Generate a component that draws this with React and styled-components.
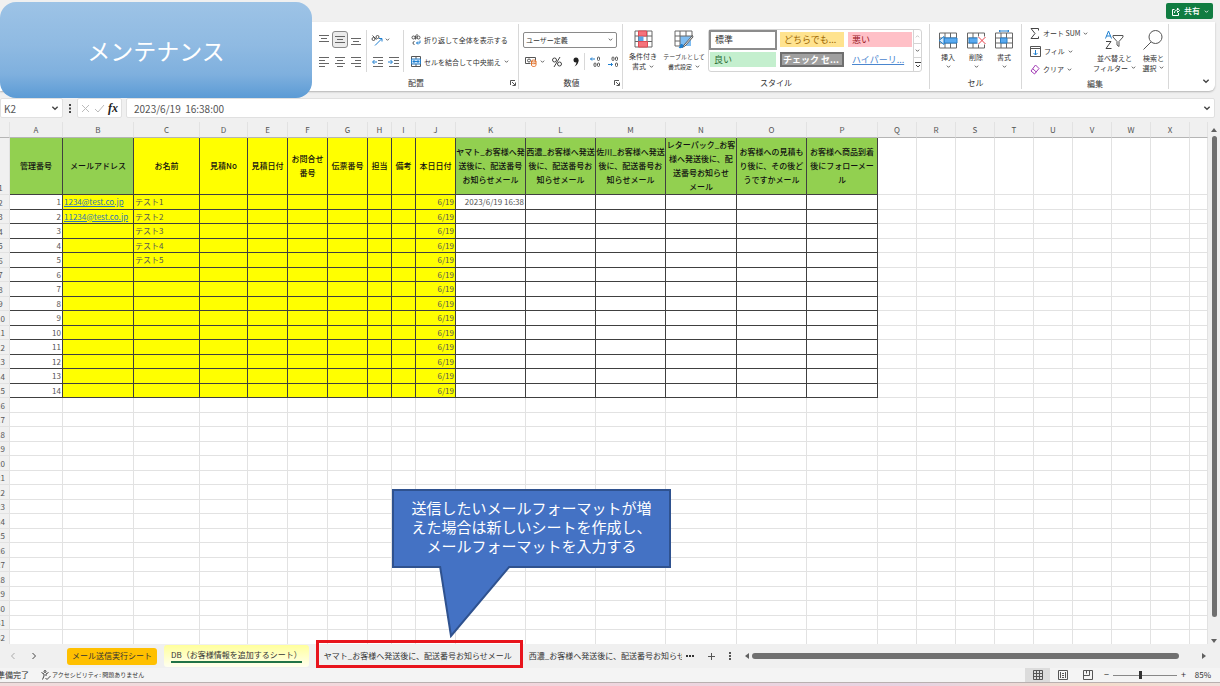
import React, { useState } from "react";
import styled, { createGlobalStyle, css } from "styled-components";

const GlobalStyle = createGlobalStyle`
  * {
    box-sizing: border-box;
  }
  body {
    margin: 0;
    background: #f0f0f0;
    color: #333;
    font-family: "Noto Sans CJK JP", "Noto Sans", sans-serif;
    font-size: 7px;
    line-height: 10px;
  }
  button, input, select {
    font: inherit;
    color: inherit;
    margin: 0;
    padding: 0;
    border: 0;
    background: none;
  }
`

const Window = styled.div`
  position: relative;
  display: flex;
  flex-direction: column;
  height: 100vh;
  overflow: hidden;
`

const TitleBar = styled.header`
  display: flex;
  justify-content: flex-end;
  height: 22px;
  padding: 3px 7px 0 0;
`

const ShareButton = styled.button`
  display: flex;
  align-items: center;
  gap: 4px;
  height: 16px;
  padding: 0 4px 0 6px;
  border-radius: 2px;
  background: #107c41;
  color: #fff;
  font-size: 8px;
  font-weight: 500;
`

const Banner = styled.h1`
  position: absolute;
  z-index: 5;
  top: 2px;
  left: 0;
  display: flex;
  align-items: center;
  justify-content: center;
  width: 312px;
  height: 96px;
  margin: 0;
  border-radius: 16px;
  background: linear-gradient(#9dc3e6, #8fbae2 45%, #7fb0de 75%, #5b9bd5);
  color: #fff;
  font-size: 23px;
  font-weight: 400;
`

/* ---------- ribbon ---------- */

const RibbonBar = styled.section`
  display: flex;
  flex: none;
  height: 69px;
  margin-right: 5px;
  padding: 2px 0 2px 312px;
  background: #fff;
  border-radius: 0 0 6px 0;
  box-shadow: 0 1px 2px rgba(0, 0, 0, 0.25);
`

const Group = styled.div`
  display: flex;
  flex-direction: column;
  flex: none;
  width: ${(p) => p.$width}px;
  border-right: 1px solid #d8d8d8;
`

const GroupBody = styled.div`
  display: flex;
  flex: 1;
  align-items: center;
  padding: ${(p) => p.$pad || "0 4px"};
  gap: ${(p) => p.$gap || 0}px;
`

const GroupLabel = styled.div`
  display: flex;
  justify-content: center;
  align-items: center;
  height: 12px;
  padding-left: ${(p) => (p.$launcher ? 10 : 0)}px;
  font-size: 8px;

  span {
    flex: 1;
    text-align: center;
  }
  svg {
    margin-right: 2px;
  }
`

const Rows = styled.div`
  display: flex;
  flex-direction: column;
  padding-left: ${(p) => p.$indent || 0}px;
`

const Row = styled.div`
  display: flex;
  align-items: center;
  height: ${(p) => p.$height || 22}px;
  gap: ${(p) => p.$gap || 0}px;
`

const IconButton = styled.button`
  display: flex;
  align-items: center;
  justify-content: center;
  width: ${(p) => p.$width || 16}px;
  height: 17px;
  border-radius: 3px;
  ${(p) =>
    p.$on &&
    css`
      background: #ebebeb;
      border: 1px solid #8a8a8a;
    `}
`

const Divider = styled.div`
  width: 1px;
  height: ${(p) => p.$height}px;
  background: #d8d8d8;
`

const TextButton = styled.button`
  display: flex;
  align-items: center;
  gap: 3px;
  height: 16px;
  white-space: nowrap;
`

const BigButton = styled.button`
  display: flex;
  flex: none;
  flex-direction: column;
  align-items: center;
  width: ${(p) => p.$width}px;
  white-space: nowrap;
  font-size: ${(p) => (p.$small ? 6 : 7)}px;

  > svg {
    margin-bottom: 3px;
  }
  span {
    display: flex;
    align-items: center;
    gap: 3px;
    height: 10px;
  }
`

const SelectBox = styled.label`
  display: flex;
  align-items: center;
  width: 94px;
  height: 16px;
  padding: 0 3px 0 2px;
  border: 1px solid #8a8a8a;
  border-radius: 2px;

  select {
    flex: 1;
    appearance: none;
    outline: 0;
  }
`

const Gallery = styled.div`
  display: flex;
  width: 214px;
  height: 43px;
  border: 1px solid #d4d4d4;
  border-radius: 3px;
`

const Swatches = styled.div`
  display: grid;
  flex: 1;
  grid-template-columns: 68px 66px 66px;
  grid-template-rows: 20px 20px;
  gap: 0 2px;
`

const Swatch = styled.button`
  margin: 2px 1px 3px;
  padding: 0 4px;
  overflow: hidden;
  text-align: left;
  white-space: nowrap;
  font-size: 9px;
  line-height: 12px;
  background: ${(p) => p.$bg};
  color: ${(p) => p.$color};
  ${(p) =>
    p.$selected &&
    css`
      margin: 0;
      border: 2px solid #8c8c8c;
    `}
  ${(p) =>
    p.$check &&
    css`
      padding: 0 1px;
      border: 2px solid #6f6f6f;
      font-weight: 700;
      line-height: 10px;
    `}
  ${(p) => p.$link && "text-decoration: underline;"}
`

const Spinner = styled.div`
  display: flex;
  flex-direction: column;
  width: 9px;
  border-left: 1px solid #d4d4d4;

  button {
    display: flex;
    flex: 1;
    align-items: center;
    justify-content: center;
  }
  button + button {
    border-top: 1px solid #d4d4d4;
  }
`

const RibbonEnd = styled.div`
  display: flex;
  flex: 1;
  align-items: flex-end;
  justify-content: flex-end;
  padding: 0 5px 4px 0;
`

/* ---------- formula bar ---------- */

const FormulaBar = styled.div`
  display: flex;
  align-items: center;
  flex: none;
  height: 20px;
  margin: 7px 5px 4px 0;
`

const Field = styled.div`
  display: flex;
  align-items: center;
  flex: ${(p) => (p.$width ? "none" : 1)};
  width: ${(p) => (p.$width ? p.$width + "px" : "auto")};
  height: 20px;
  padding: 0 3px;
  background: #fff;
  border: 1px solid #e0e0e0;
  border-radius: 2px;

  input {
    flex: 1;
    min-width: 0;
    outline: 0;
    font-size: 10px;
    color: #555;
  }
`

const FormulaInput = styled.input`
  padding-left: 4px;
`

const Dots = styled.div`
  display: flex;
  justify-content: center;
  width: 14px;
`

const FormulaButtons = styled(Field)`
  justify-content: space-between;
  margin-right: 4px;
`

const Fx = styled.em`
  font-family: "Liberation Serif", serif;
  font-size: 12px;
  font-weight: 700;
  color: #222;
`

/* ---------- grid ---------- */

const SheetArea = styled.div`
  display: flex;
  flex: 1;
  min-height: 0;
`

const GridView = styled.div`
  flex: 1;
  min-width: 0;
  overflow: hidden;
  background: #fff;
`

const Table = styled.table`
  width: calc(100% + 8px);
  margin-left: -8px;
  table-layout: fixed;
  border-collapse: separate;
  border-spacing: 0;
  font-size: 8px;
  line-height: 12px;

  tr {
    height: 15px;
  }
  tbody tr:nth-child(odd) {
    height: 14px;
  }
  thead tr {
    height: 16px;
  }
  tbody tr:first-child {
    height: 57px;
  }
`

const HeadCell = styled.th`
  padding: 0;
  background: #f0f0f0;
  border-right: 1px solid #e2e2e2;
  border-bottom: 1px solid ${(p) => (p.$row ? "#e2e2e2" : "#b5b5b5")};
  font-weight: 400;
  color: #555;
  vertical-align: ${(p) => (p.$row ? "bottom" : "middle")};
`

const fills = { green: "#92d050", yellow: "#ffff00", white: "#fff" }

const Cell = styled.td`
  padding: 0 1px;
  overflow: hidden;
  white-space: nowrap;
  background: ${(p) => fills[p.$fill] || "#fff"};
  border-right: 1px solid ${(p) => (p.$fill ? "#404040" : "#e2e2e2")};
  border-bottom: 1px solid ${(p) => (p.$fill ? "#404040" : "#e2e2e2")};
  text-align: ${(p) => p.$align || "left"};
  color: #555;

  a {
    color: #2f75b5;
  }
`

const TitleCell = styled(Cell)`
  padding: 0;
  text-align: center;
  color: #111;
  font-weight: 500;
  line-height: 14px;
`

const VScroll = styled.div`
  display: flex;
  flex-direction: column;
  align-items: center;
  gap: 3px;
  flex: none;
  width: 12px;
  padding: 5px 0 0;
`

const Thumb = styled.div`
  flex: 1;
  background: #707070;
  border-radius: 3px;
  ${(p) => (p.$vertical ? "width: 5px; margin-bottom: 18px;" : "height: 6px; margin-right: 20px;")}
`

const Callout = styled.div`
  position: absolute;
  z-index: 4;
  left: 392px;
  top: 489px;
  width: 279px;
  padding: 7px 0 11px;
  background: #4472c4;
  border: 2px solid #2f528f;
  color: #fff;
  font-size: 15px;
  line-height: 19px;
  text-align: center;

  svg {
    position: absolute;
    left: 43px;
    top: 75px;
  }
`

/* ---------- sheet tabs and status bar ---------- */

const TabStrip = styled.nav`
  display: flex;
  align-items: center;
  flex: none;
  height: 24px;
  padding-right: 13px;
`

const TabNav = styled.div`
  display: flex;
  align-items: center;
  gap: 13px;
  width: 67px;
  padding-left: 9px;
`

const Tab = styled.button`
  position: relative;
  height: 22px;
  padding: 0 8px;
  white-space: nowrap;
  font-size: 8px;
  line-height: 12px;
  color: #333;
  ${(p) =>
    p.$kind === "orange" &&
    css`
      height: 17px;
      margin-right: 7px;
      padding: 0 5px;
      border-radius: 3px;
      background: #ffc000;
    `}
  ${(p) =>
    p.$kind === "active" &&
    css`
      margin-right: 10px;
      padding: 0 7px 2px;
      border-radius: 3px;
      background: linear-gradient(#ffff9c, #fffff0);

      span {
        display: block;
        border-bottom: 1px solid #217346;
        box-shadow: 0 1px #217346;
      }
    `}
  ${(p) =>
    p.$kind === "marked" &&
    css`
      padding: 0 8px 0 5px;

      &::after {
        content: "";
        position: absolute;
        inset: -5px -3px -1px;
        border: 3px solid #e8141c;
      }
    `}
  ${(p) =>
    p.$kind === "cut" &&
    css`
      width: 162px;
      padding: 0 0 0 9px;
      overflow: hidden;
      text-align: left;
    `}
`

const TabTools = styled.div`
  display: flex;
  align-items: center;
  gap: 13px;
  padding: 0 13px 0 4px;
`

const HScroll = styled.div`
  display: flex;
  flex: 1;
  align-items: center;
  gap: 2px;
`

const StatusBar = styled.footer`
  display: flex;
  align-items: center;
  flex: none;
  height: 14px;
  padding-right: 9px;
  background: #f4f4f4;
`

const StatusText = styled.span`
  margin-left: ${(p) => (p.$first ? -3 : 0)}px;
  margin-right: 12px;
  font-size: ${(p) => (p.$first ? 8 : 6)}px;
  display: flex;
  align-items: center;
  gap: 1px;
  white-space: nowrap;
`

const StatusRight = styled.div`
  display: flex;
  align-items: center;
  margin-left: auto;
  font-size: 8px;
`

const ViewButton = styled.button`
  display: flex;
  align-items: center;
  justify-content: center;
  width: 25px;
  height: 14px;
  background: ${(p) => (p.$on ? "#dcdcdc" : "none")};
`

const ZoomButton = styled.button`
  width: 13px;
  font-size: 9px;
`

const ZoomSlider = styled.input`
  appearance: none;
  width: 64px;
  height: 10px;
  background: linear-gradient(#888, #888) center / 100% 1px no-repeat;

  &::-webkit-slider-thumb {
    appearance: none;
    width: 3px;
    height: 8px;
    background: #333;
  }
`

const ZoomValue = styled.span`
  width: 21px;
  text-align: right;
`

const Desktop = styled.div`
  flex: none;
  height: 4px;
  border-top: 1px solid #b9b0b0;
  background: linear-gradient(90deg, #f0dcdc, #f3d6dc 40%, #e6d3e2 75%, #f3dccb 90%, #f0e0dc);
`

/* ---------- icons ---------- */

const Chevron = ({ size = 5, color = "#444", up }) => (
  <svg width={size} height={size} viewBox="0 0 6 6" fill="none" stroke={color}>
    <path d={up ? "M1 4l2-2 2 2" : "M1 2l2 2 2-2"} />
  </svg>
)

const Lines = ({ rows }) => (
  <svg width="10" height="11" viewBox="0 0 10 11" stroke="#666">
    {rows.map(([x1, x2, y]) => (
      <path key={y} d={`M${x1} ${y}.5H${x2}`} />
    ))}
  </svg>
)

const Indent = ({ right }) => (
  <svg width="11" height="11" viewBox="0 0 11 11" fill="none">
    <path d="M1 1.500h10M6 4.500h5M6 7.500h5M1 10.500h10" stroke="#666" />
    <path d={right ? "M0 6h4M2.500 4L4.500 6l-2 2" : "M1 6h4M2.500 4L.500 6l2 2"} stroke="#1e7fd0" />
  </svg>
)

const Orientation = () => (
  <svg width="12" height="12" viewBox="0 0 12 12" fill="none">
    <circle cx="2.500" cy="5" r="1.500" stroke="#555" />
    <path d="M1.500 1.500l4 4" stroke="#555" />
    <circle cx="6.500" cy="3" r="1.500" stroke="#555" />
    <path d="M4 11.500l6.500-6.500M8 4.500h3v3" stroke="#1e7fd0" />
  </svg>
)

const WrapIcon = () => (
  <svg width="10" height="12" viewBox="0 0 10 12" fill="none">
    <circle cx="2.500" cy="3.500" r="1.500" stroke="#555" />
    <path d="M4.500 1.500v4M6 0v5" stroke="#555" />
    <circle cx="7.500" cy="3.500" r="1.500" stroke="#555" />
    <path d="M3.500 7.500a1.500 1.500 0 1 0 0 3" stroke="#555" />
    <path d="M9 6.500v2.500H5.500M7 7.500L5.500 9 7 10.500" stroke="#1e7fd0" />
  </svg>
)

const MergeIcon = () => (
  <svg width="10" height="11" viewBox="0 0 10 11" fill="none" stroke="#555">
    <path d="M.500.500h9v10h-9zM5 .500v2.500M5 8v2.500" />
    <path d="M.500 3h9v5h-9z" fill="#cfe6f8" stroke="#2b7fc6" />
    <path d="M2 5.500h6M3.500 4L2 5.500 3.500 7M6.500 4L8 5.500 6.500 7" stroke="#1e7fd0" />
  </svg>
)

const CurrencyIcon = () => (
  <svg width="12" height="11" viewBox="0 0 12 11" fill="none">
    <path d="M.500 1.500h10v3M.500 1.500v6h5" stroke="#555" />
    <circle cx="4" cy="4.500" r="1.500" stroke="#555" />
    <path d="M6.500 5v4c0 2 4.500 2 4.500 0V5M6.500 7c1 1 3.500 1 4.500 0" stroke="#e0702a" />
    <ellipse cx="8.700" cy="5" rx="2.200" ry="1" stroke="#e0702a" />
  </svg>
)

const DecimalIcon = ({ less }) => (
  <svg width="11" height="12" viewBox="0 0 11 12" fill="none">
    <path d={less ? "M0 8.500h4.500M3 7l1.500 1.500L3 10" : "M.500 3H5M2 1.500L.500 3 2 4.500"} stroke="#1e7fd0" />
    <rect x="7.500" y="1" width="2" height="3.500" rx="1" stroke="#555" />
    <rect x="7.500" y="7" width="2" height="3.500" rx="1" stroke="#555" />
    {less ? (
      <rect x="4" y="1" width="2" height="3.500" rx="1" stroke="#555" />
    ) : (
      <rect x="4" y="7" width="2" height="3.500" rx="1" stroke="#555" />
    )}
  </svg>
)

const Launcher = () => (
  <svg width="6" height="6" viewBox="0 0 6 6" fill="none" stroke="#555">
    <path d="M.500 5V.500H5M2 2l3 3M5.500 2.500v3h-3" />
  </svg>
)

const ConditionalIcon = () => (
  <svg width="19" height="18" viewBox="0 0 19 18" fill="none">
    <path d="M1 1h17v16H1zM1 6h17M1 11.500h17M4.500 1v16M13 1v16" stroke="#666" />
    <path d="M4.500 1h8v5h-8zM4.500 11.500h9V17h-9z" fill="#f4737c" stroke="#e04a55" />
    <path d="M4.500 6.500h5v4.500h-5z" fill="#5aa5e6" />
  </svg>
)

const TableFormatIcon = () => (
  <svg width="20" height="19" viewBox="0 0 20 19" fill="none">
    <path d="M6 6h11v10H6z" fill="#7fbdf2" />
    <path d="M1 1h17v5M1 1v15h5M1 6h17M1 11h5M6 1v15M12 1v5" stroke="#666" />
    <path d="M18.500 5.500L10 15l-2 2.500 3-1.500 8-9z" fill="#fff" stroke="#555" />
    <path d="M6.500 14.500c1-1 3 0 3 1.500s-2 2.500-5 2c1-.500 1-2.500 2-3.500z" fill="#1e7fd0" />
  </svg>
)

const CellsIcon = ({ kind }) => (
  <svg width="20" height="19" viewBox="0 0 20 19" fill="none">
    <path d="M1.500 3h17v15h-17zM1.500 8h17M1.500 13h17M7 3v15M12.500 3v15" stroke="#666" />
    {kind === "insert" && <path d="M6 8h13v5H6z" fill="#5aaaf0" stroke="#2b7fc6" />}
    {kind === "insert" && <path d="M6 6.500L1 10.500l5 4z" fill="#d6eafa" stroke="#1e7fd0" />}
    {kind === "delete" && <path d="M3 8h9v5H3z" fill="#5aaaf0" stroke="#2b7fc6" />}
    {kind === "delete" && <path d="M11.500 6.500H20v8h-8.500z" fill="#fff" />}
    {kind === "delete" && <path d="M12.500 7l7 7M19.500 7l-7 7" stroke="#e8424c" />}
    {kind === "format" && <path d="M6.500 8h6.500v5H6.500z" fill="#5aaaf0" stroke="#2b7fc6" />}
    {kind === "format" && <path d="M5 1h10M6.500 0L5 1l1.500 1M13.500 0L15 1l-1.500 1" stroke="#1e7fd0" />}
  </svg>
)

const SigmaIcon = () => (
  <svg width="10" height="11" viewBox="0 0 10 11" fill="none" stroke="#444">
    <path d="M8.500 2.500v-2H1L5 5.500 1 10.500h7.500v-2" />
  </svg>
)

const FillIcon = () => (
  <svg width="11" height="11" viewBox="0 0 11 11" fill="none">
    <path d="M.500.500h10v10H.500zM.500 2.500h10" stroke="#555" />
    <path d="M5.500 4v5M3.500 7l2 2 2-2" stroke="#1e7fd0" />
  </svg>
)

const EraserIcon = () => (
  <svg width="10" height="11" viewBox="0 0 10 11" fill="none" stroke="#a23bb5">
    <path d="M5.500 1L9 4.500 4.500 10 1 7zM2.800 4.800L6.300 8" />
  </svg>
)

const SortIcon = () => (
  <svg width="20" height="20" viewBox="0 0 20 20" fill="none">
    <path d="M1.500 8.500L4.500 1l3 7.500M2.500 6h4" stroke="#1e7fd0" />
    <path d="M2 11.500h5l-5 7h5.500" stroke="#444" />
    <path d="M9 5.500h10v1.500l-4 4.500v5l-2-1.500V11.500L9 7z" stroke="#555" />
  </svg>
)

const SearchIcon = () => (
  <svg width="20" height="20" viewBox="0 0 20 20" fill="none" stroke="#555">
    <circle cx="12.500" cy="7" r="6.500" />
    <path d="M8 12L.500 19.500" />
  </svg>
)

const ShareIcon = () => (
  <svg width="8" height="9" viewBox="0 0 8 9" fill="none" stroke="#fff">
    <path d="M2.500 2.500h-2v6h6V6M2.500 6c0-2 1-3 3-3V1l2 2.500-2 2V4" />
  </svg>
)

const Arrow = ({ dir }) => {
  const d = {
    up: "M3 1l3 4H0z",
    down: "M0 1h6L3 5z",
    left: "M5 0v6L1 3z",
    right: "M1 0l4 3-4 3z",
  }[dir]
  return (
    <svg width="6" height="6" viewBox="0 0 6 6" fill="#606060">
      <path d={d} />
    </svg>
  )
}

const ViewIcon = ({ d }) => (
  <svg width="10" height="10" viewBox="0 0 10 10" fill="none" stroke="#555">
    <path d={d} />
  </svg>
)

/* ---------- data ---------- */

const columns = [
  { id: "A", width: 53, fill: "green", title: ["管理番号"] },
  { id: "B", width: 71, fill: "green", title: ["メールアドレス"] },
  { id: "C", width: 66, fill: "yellow", title: ["お名前"] },
  { id: "D", width: 48, fill: "yellow", title: ["見積No"] },
  { id: "E", width: 40, fill: "yellow", title: ["見積日付"] },
  { id: "F", width: 40, fill: "yellow", title: ["お問合せ", "番号"] },
  { id: "G", width: 40, fill: "yellow", title: ["伝票番号"] },
  { id: "H", width: 24, fill: "yellow", title: ["担当"] },
  { id: "I", width: 24, fill: "yellow", title: ["備考"] },
  { id: "J", width: 40, fill: "yellow", title: ["本日日付"] },
  { id: "K", width: 70, fill: "green", title: ["ヤマト_お客様へ発", "送後に、配送番号", "お知らせメール"] },
  { id: "L", width: 70, fill: "green", title: ["西濃_お客様へ発送", "後に、配送番号お", "知らせメール"] },
  { id: "M", width: 70, fill: "green", title: ["佐川_お客様へ発送", "後に、配送番号お", "知らせメール"] },
  { id: "N", width: 71, fill: "green", title: ["レターパック_お客", "様へ発送後に、配", "送番号お知らせ", "メール"] },
  { id: "O", width: 70, fill: "green", title: ["お客様への見積も", "り後に、その後ど", "うですかメール"] },
  { id: "P", width: 71, fill: "green", title: ["お客様へ商品到着", "後にフォローメー", "ル"] },
  { id: "Q", width: 39 },
  { id: "R", width: 39 },
  { id: "S", width: 39 },
  { id: "T", width: 39 },
  { id: "U", width: 39 },
  { id: "V", width: 39 },
  { id: "W", width: 39 },
  { id: "X", width: 39 },
  { id: "" },
]

const mails = ["1234@test.co.jp", "11234@test.co.jp"]
const LAST_DATA_ROW = 15
const ROW_COUNT = 32

function cellValue(col, n) {
  if (col === "A") return n
  if (col === "B" && mails[n - 1]) return <a href={"mailto:" + mails[n - 1]}>{mails[n - 1]}</a>
  if (col === "C" && n <= 5) return "テスト" + n
  if (col === "J") return "6/19"
  if (col === "K" && n === 1) return "2023/6/19 16:38"
  return null
}

const swatches = [
  { text: "標準", $bg: "#fff", $color: "#333", $selected: true },
  { text: "どちらでも...", $bg: "#ffe38f", $color: "#9c6500" },
  { text: "悪い", $bg: "#ffc0c7", $color: "#9c1a26" },
  { text: "良い", $bg: "#c4efce", $color: "#2a6b34" },
  { text: "チェック セ...", $bg: "#a0a0a0", $color: "#fff", $check: true },
  { text: "ハイパーリ...", $bg: "#fff", $color: "#4a86cf", $link: true },
]

/* ---------- parts ---------- */

function RibbonGroup({ width, label, launcher, pad, gap, children }) {
  return (
    <Group $width={width}>
      <GroupBody $pad={pad} $gap={gap}>{children}</GroupBody>
      <GroupLabel $launcher={launcher}>
        <span>{label}</span>
        {launcher && <Launcher />}
      </GroupLabel>
    </Group>
  )
}

function Ribbon() {
  return (
    <RibbonBar>
      <RibbonGroup width={207} label="配置" launcher gap={2}>
        <Rows>
          <Row>
            <IconButton aria-label="上揃え"><Lines rows={[[0, 10, 1], [2, 8, 4], [0, 10, 7]]} /></IconButton>
            <IconButton $on aria-label="上下中央揃え"><Lines rows={[[0, 10, 2], [2, 8, 5], [0, 10, 8]]} /></IconButton>
            <IconButton aria-label="下揃え"><Lines rows={[[0, 10, 4], [2, 8, 7], [0, 10, 10]]} /></IconButton>
          </Row>
          <Row>
            <IconButton aria-label="左揃え"><Lines rows={[[0, 10, 1], [0, 6, 4], [0, 10, 7], [0, 6, 10]]} /></IconButton>
            <IconButton aria-label="中央揃え"><Lines rows={[[0, 10, 1], [2, 8, 4], [0, 10, 7], [2, 8, 10]]} /></IconButton>
            <IconButton aria-label="右揃え"><Lines rows={[[0, 10, 1], [4, 10, 4], [0, 10, 7], [4, 10, 10]]} /></IconButton>
          </Row>
        </Rows>
        <Divider $height={42} />
        <Rows>
          <Row>
            <IconButton aria-label="方向"><Orientation /></IconButton>
            <Chevron />
          </Row>
          <Row>
            <IconButton aria-label="インデントを減らす"><Indent /></IconButton>
            <IconButton aria-label="インデントを増やす"><Indent right /></IconButton>
          </Row>
        </Rows>
        <Divider $height={42} />
        <Rows $indent={5}>
          <Row>
            <TextButton><WrapIcon />折り返して全体を表示する</TextButton>
          </Row>
          <Row>
            <TextButton><MergeIcon />セルを結合して中央揃え<Chevron /></TextButton>
          </Row>
        </Rows>
      </RibbonGroup>

      <RibbonGroup width={104} label="数値" launcher>
        <Rows>
          <Row>
            <SelectBox>
              <select aria-label="表示形式" defaultValue="ユーザー定義">
                <option>ユーザー定義</option>
              </select>
              <Chevron />
            </SelectBox>
          </Row>
          <Row $gap={1}>
            <IconButton aria-label="通貨"><CurrencyIcon /></IconButton>
            <Chevron />
            <IconButton $width={22} aria-label="パーセント">
              <svg width="10" height="10" viewBox="0 0 10 10" fill="none" stroke="#444">
                <circle cx="2.500" cy="3" r="2" />
                <circle cx="7.500" cy="7" r="2" />
                <path d="M8 0L2 10" />
              </svg>
            </IconButton>
            <IconButton $width={14} aria-label="桁区切り">
              <svg width="6" height="10" viewBox="0 0 6 10" fill="#222">
                <circle cx="3" cy="3" r="2.500" />
                <path d="M5.500 3c0 3-1 5-4 6.500 1.500-2 2-3 2-5z" />
              </svg>
            </IconButton>
            <Divider $height={17} />
            <IconButton $width={18} aria-label="小数点以下を増やす"><DecimalIcon /></IconButton>
            <IconButton aria-label="小数点以下を減らす"><DecimalIcon less /></IconButton>
          </Row>
        </Rows>
      </RibbonGroup>

      <RibbonGroup width={307} label="スタイル" pad="0 3px">
        <BigButton $width={34}>
          <ConditionalIcon />
          <span>条件付き</span>
          <span>書式<Chevron /></span>
        </BigButton>
        <BigButton $width={48} $small>
          <TableFormatIcon />
          <span>テーブルとして</span>
          <span>書式設定<Chevron /></span>
        </BigButton>
        <Gallery>
          <Swatches>
            {swatches.map(({ text, ...look }) => (
              <Swatch key={text} {...look}>{text}</Swatch>
            ))}
          </Swatches>
          <Spinner>
            <button aria-label="前の行"><Chevron up color="#bbb" /></button>
            <button aria-label="次の行"><Chevron /></button>
            <button aria-label="その他">
              <svg width="6" height="7" viewBox="0 0 6 7" fill="none" stroke="#444"><path d="M0 1.500h6M1 4l2 2 2-2" /></svg>
            </button>
          </Spinner>
        </Gallery>
      </RibbonGroup>

      <RibbonGroup width={92} label="セル">
        <BigButton $width={28}><CellsIcon kind="insert" /><span>挿入</span><span><Chevron /></span></BigButton>
        <BigButton $width={28}><CellsIcon kind="delete" /><span>削除</span><span><Chevron /></span></BigButton>
        <BigButton $width={28}><CellsIcon kind="format" /><span>書式</span><span><Chevron /></span></BigButton>
      </RibbonGroup>

      <RibbonGroup width={147} label="編集" pad="0 4px 0 8px" gap={4}>
        <Rows>
          <Row $height={18}>
            <TextButton><SigmaIcon />オート SUM<Chevron /></TextButton>
          </Row>
          <Row $height={18}>
            <TextButton><FillIcon />フィル<Chevron /></TextButton>
          </Row>
          <Row $height={18}>
            <TextButton><EraserIcon />クリア<Chevron /></TextButton>
          </Row>
        </Rows>
        <BigButton $width={44}>
          <SortIcon />
          <span>並べ替えと</span>
          <span>フィルター<Chevron /></span>
        </BigButton>
        <BigButton $width={26}>
          <SearchIcon />
          <span>検索と</span>
          <span>選択<Chevron /></span>
        </BigButton>
      </RibbonGroup>

      <RibbonEnd>
        <Chevron size={8} />
      </RibbonEnd>
    </RibbonBar>
  )
}

function Grid() {
  const rows = Array.from({ length: ROW_COUNT }, (_, i) => i + 1)
  return (
    <Table>
      <colgroup>
        <col width="18" />
        {columns.map((c) => (
          <col key={c.id} width={c.width} />
        ))}
      </colgroup>
      <thead>
        <tr>
          <HeadCell />
          {columns.map((c) => (
            <HeadCell key={c.id} scope="col">{c.id}</HeadCell>
          ))}
        </tr>
      </thead>
      <tbody>
        {rows.map((r) => (
          <tr key={r}>
            <HeadCell $row scope="row">{r}</HeadCell>
            {columns.map((c) => {
              if (r === 1) {
                return (
                  <TitleCell key={c.id} $fill={c.fill}>
                    {c.title && c.title.map((line) => <div key={line}>{line}</div>)}
                  </TitleCell>
                )
              }
              if (r > LAST_DATA_ROW || !c.fill) return <Cell key={c.id} />
              const yellow = c.fill === "yellow" || c.id === "B"
              return (
                <Cell
                  key={c.id}
                  $fill={yellow ? "yellow" : "white"}
                  $align={"AJK".includes(c.id) ? "right" : "left"}
                >
                  {cellValue(c.id, r - 1)}
                </Cell>
              )
            })}
          </tr>
        ))}
      </tbody>
    </Table>
  )
}

export default function App() {
  const [formula, setFormula] = useState("2023/6/19  16:38:00")
  const [zoom, setZoom] = useState(42)

  return (
    <Window>
      <GlobalStyle />
      <TitleBar>
        <ShareButton><ShareIcon />共有<Chevron color="#fff" /></ShareButton>
      </TitleBar>
      <Banner>メンテナンス</Banner>
      <Ribbon />

      <FormulaBar>
        <Field $width={63}>
          <input aria-label="名前ボックス" defaultValue="K2" />
          <Chevron size={8} />
        </Field>
        <Dots>
          <svg width="2" height="9" viewBox="0 0 2 9" fill="#444">
            <path d="M0 0h2v2H0zM0 3.500h2v2H0zM0 7h2v2H0z" />
          </svg>
        </Dots>
        <FormulaButtons $width={45}>
          <svg width="9" height="9" viewBox="0 0 9 9" stroke="#bbb"><path d="M1 1l7 7M8 1L1 8" /></svg>
          <svg width="11" height="9" viewBox="0 0 11 9" fill="none" stroke="#bbb"><path d="M1 5l3 3 6-7" /></svg>
          <Fx>fx</Fx>
        </FormulaButtons>
        <Field>
          <FormulaInput
            aria-label="数式バー"
            value={formula}
            onChange={(e) => setFormula(e.target.value)}
          />
          <Chevron size={8} />
        </Field>
      </FormulaBar>

      <SheetArea>
        <GridView>
          <Grid />
        </GridView>
        <VScroll>
          <Arrow dir="up" />
          <Thumb $vertical />
          <Arrow dir="down" />
        </VScroll>
      </SheetArea>

      <Callout>
        送信したいメールフォーマットが増
        <br />
        えた場合は新しいシートを作成し、
        <br />
        メールフォーマットを入力する
        <svg width="76" height="72" viewBox="0 0 76 72">
          <path d="M3 0L14 70L73 0" fill="#4472c4" stroke="#2f528f" strokeWidth="2" />
        </svg>
      </Callout>

      <TabStrip>
        <TabNav>
          <svg width="8" height="8" viewBox="0 0 8 8" fill="none" stroke="#aaa"><path d="M5.500 1l-3 3 3 3" /></svg>
          <svg width="8" height="8" viewBox="0 0 8 8" fill="none" stroke="#444"><path d="M2.500 1l3 3-3 3" /></svg>
        </TabNav>
        <Tab $kind="orange">メール送信実行シート</Tab>
        <Tab $kind="active"><span>DB（お客様情報を追加するシート）</span></Tab>
        <Tab $kind="marked">ヤマト_お客様へ発送後に、配送番号お知らせメール</Tab>
        <Tab $kind="cut">西濃_お客様へ発送後に、配送番号お知らせメール</Tab>
        <TabTools>
          <svg width="8" height="2" viewBox="0 0 8 2" fill="#333"><path d="M0 0h2v2H0zM3 0h2v2H3zM6 0h2v2H6z" /></svg>
          <svg width="9" height="9" viewBox="0 0 9 9" stroke="#555"><path d="M4.500 1v7M1 4.500h7" /></svg>
          <svg width="2" height="8" viewBox="0 0 2 8" fill="#555"><path d="M0 0h2v2H0zM0 3h2v2H0zM0 6h2v2H0z" /></svg>
        </TabTools>
        <HScroll>
          <Arrow dir="left" />
          <Thumb />
          <Arrow dir="right" />
        </HScroll>
      </TabStrip>

      <StatusBar>
        <StatusText $first>準備完了</StatusText>
        <StatusText>
          <svg width="10" height="10" viewBox="0 0 10 10" fill="none" stroke="#444">
            <circle cx="4" cy="1.500" r="1" />
            <path d="M.500 2.500L3 4v2L1.500 9.500M7.500 2.500L5 4v2M4.500 8l1.500 1.500L9.500 6" />
          </svg>
          アクセシビリティ: 問題ありません
        </StatusText>
        <StatusRight>
          <ViewButton $on aria-label="標準"><ViewIcon d="M.500.500h9v9h-9zM.500 3.500h9M.500 6.500h9M3.500.500v9M6.500.500v9" /></ViewButton>
          <ViewButton aria-label="ページ レイアウト"><ViewIcon d="M.500.500h9v9h-9zM2.500 2v6M7.500 2v6M4 3.500h2M4 5.500h2M4 7.500h2" /></ViewButton>
          <ViewButton aria-label="改ページ プレビュー"><ViewIcon d="M.500.500h9v9h-9zM.500 5.500h6V.500M3.500.500v3" /></ViewButton>
          <ZoomButton aria-label="縮小">−</ZoomButton>
          <ZoomSlider
            type="range"
            aria-label="ズーム"
            value={zoom}
            onChange={(e) => setZoom(e.target.value)}
          />
          <ZoomButton aria-label="拡大">+</ZoomButton>
          <ZoomValue>85%</ZoomValue>
        </StatusRight>
      </StatusBar>
      <Desktop />
    </Window>
  )
}
